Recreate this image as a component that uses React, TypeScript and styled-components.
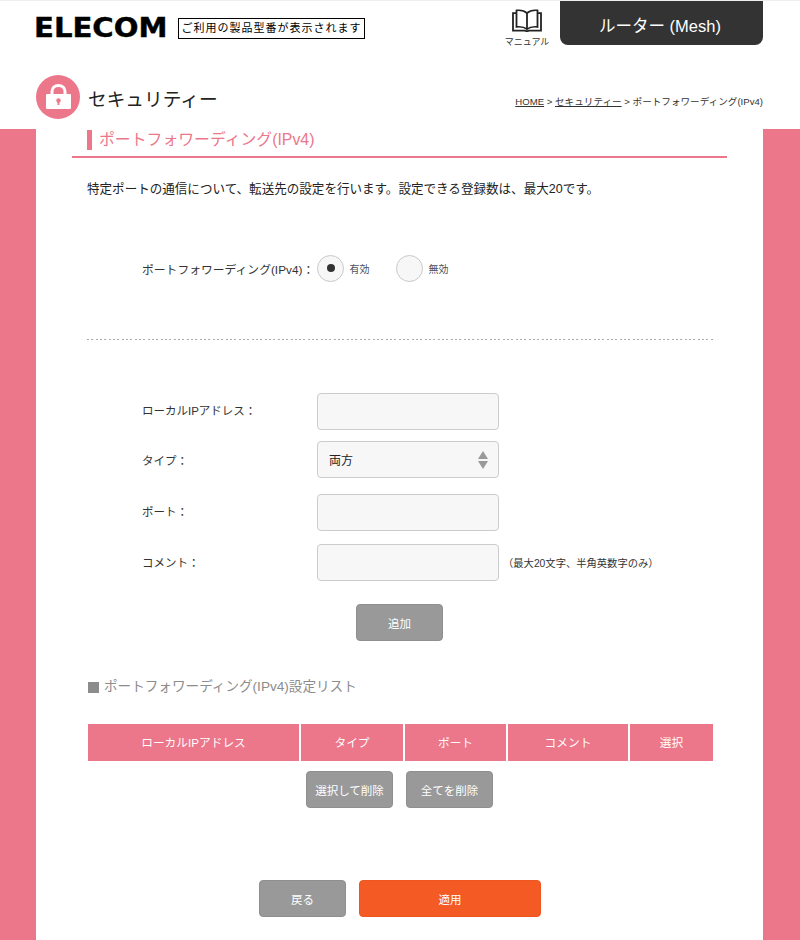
import styled, { createGlobalStyle } from "styled-components"

const pink = "#ec768a"
const grey = "#999999"

const GlobalStyle = createGlobalStyle`
    html, body {
        margin: 0;
        padding: 0;
        background: #ffffff;
    }
    body {
        font-family: "Liberation Sans", "Noto Sans CJK JP", sans-serif;
        color: #333333;
    }
`

const columns = [
    { label: "ローカルIPアドレス" },
    { label: "タイプ" },
    { label: "ポート" },
    { label: "コメント" },
    { label: "選択" }
]

const BookIcon = () => (
    <svg width="30" height="23" viewBox="0 0 30 25" preserveAspectRatio="none" fill="none" stroke="#222" strokeWidth="1.8">
        <path d="M15 4.5C12.5 1.8 8.5 1 4.5 1.5V19.5C8.5 19 12.5 19.8 15 22C17.5 19.8 21.5 19 25.5 19.5V1.5C21.5 1 17.5 1.8 15 4.5Z" />
        <path d="M15 4.5V22" />
        <path d="M4.5 4.5H1V23.5H12.5C13.5 23.5 14 24 15 24C16 24 16.5 23.5 17.5 23.5H29V4.5H25.5" />
    </svg>
)

const LockIcon = () => (
    <svg width="25" height="25" viewBox="0 0 25 25" fill="none">
        <path d="M6 11V7.5C6 3.8 8.8 1.5 12.5 1.5C16.2 1.5 19 3.8 19 7.5V11" stroke="#fff" strokeWidth="3" />
        <rect x="0" y="10" width="25" height="15" rx="1" fill="#fff" />
        <circle cx="12.5" cy="16.5" r="2.2" fill={pink} />
        <rect x="11.6" y="17" width="1.8" height="4" fill={pink} />
    </svg>
)

const SelectArrows = () => (
    <svg width="10" height="18" viewBox="0 0 10 18" fill={grey}>
        <path d="M5 0L10 8H0Z" />
        <path d="M0 10H10L5 18Z" />
    </svg>
)

export default function App() {
    return (
        <Page>
            <GlobalStyle />
            <Header>
                <TopRow>
                    <Logo>ELECOM</Logo>
                    <ModelTag>ご利用の製品型番が表示されます</ModelTag>
                    <Manual>
                        <BookIcon />
                        <ManualLabel>マニュアル</ManualLabel>
                    </Manual>
                    <RouterTab>ルーター (Mesh)</RouterTab>
                </TopRow>
                <TitleRow>
                    <TitleIcon>
                        <LockIcon />
                    </TitleIcon>
                    <PageTitle>セキュリティー</PageTitle>
                    <Breadcrumb>
                        <u>HOME</u> &gt; <u>セキュリティー</u> &gt; ポートフォワーディング(IPv4)
                    </Breadcrumb>
                </TitleRow>
            </Header>
            <Main>
                <SectionHeading>
                    <SectionTitle>ポートフォワーディング(IPv4)</SectionTitle>
                </SectionHeading>
                <Intro>特定ポートの通信について、転送先の設定を行います。設定できる登録数は、最大20です。</Intro>
                <SwitchRow>
                    <FieldLabel>ポートフォワーディング(IPv4)：</FieldLabel>
                    <Radio $checked />
                    <RadioLabel>有効</RadioLabel>
                    <Radio />
                    <RadioLabel>無効</RadioLabel>
                </SwitchRow>
                <Divider />
                <FormRow $top={0}>
                    <FormLabel $lift={2}>ローカルIPアドレス：</FormLabel>
                    <TextInput />
                </FormRow>
                <FormRow $top={11}>
                    <FormLabel $lift={0}>タイプ：</FormLabel>
                    <SelectBox>
                        両方
                        <SelectArrows />
                    </SelectBox>
                </FormRow>
                <FormRow $top={16}>
                    <FormLabel $lift={2}>ポート：</FormLabel>
                    <TextInput />
                </FormRow>
                <FormRow $top={13}>
                    <FormLabel $lift={1}>コメント：</FormLabel>
                    <TextInput />
                    <Hint>（最大20文字、半角英数字のみ）</Hint>
                </FormRow>
                <AddRow>
                    <GreyButton $width={87}>追加</GreyButton>
                </AddRow>
                <ListTitle>ポートフォワーディング(IPv4)設定リスト</ListTitle>
                <TableHead>
                    {columns.map(column => (
                        <HeadCell key={column.label}>{column.label}</HeadCell>
                    ))}
                </TableHead>
                <DeleteRow>
                    <GreyButton $width={87}>選択して削除</GreyButton>
                    <GreyButton $width={87}>全てを削除</GreyButton>
                </DeleteRow>
                <FooterRow>
                    <GreyButton $width={87}>戻る</GreyButton>
                    <ApplyButton>適用</ApplyButton>
                </FooterRow>
            </Main>
        </Page>
    )
}

const Page = styled.div`
    width: 800px;
    height: 940px;
    overflow: hidden;
    background: ${pink};
`

const Header = styled.header`
    height: 129px;
    box-sizing: border-box;
    padding: 0 37px 0 36px;
    background: #ffffff;
    border-top: 1px solid #eeeeee;
`

const TopRow = styled.div`
    display: flex;
    align-items: flex-start;
    height: 74px;
`

const Logo = styled.div`
    width: 133px;
    margin: 12px 0 0 -2px;
    padding-right: 2px;
    font-family: "DejaVu Sans", sans-serif;
    font-size: 26px;
    line-height: 30px;
    font-weight: 700;
    color: #000000;
    transform: scaleX(1.12);
    transform-origin: left center;
    -webkit-text-stroke: 0.4px #000;
`

const ModelTag = styled.div`
    margin: 17px 0 0 9px;
    width: 187px;
    height: 21px;
    box-sizing: border-box;
    border: 1px solid #000000;
    font-size: 11px;
    line-height: 19px;
    letter-spacing: 1px;
    text-align: center;
    white-space: nowrap;
    color: #000000;
`

const Manual = styled.div`
    display: flex;
    flex-direction: column;
    align-items: center;
    width: 46px;
    margin: 8px 10px 0 139px;
`

const ManualLabel = styled.span`
    margin-top: 4px;
    font-size: 9px;
    line-height: 12px;
    white-space: nowrap;
`

const RouterTab = styled.div`
    width: 203px;
    height: 44px;
    box-sizing: border-box;
    padding: 3px 3px 0 0;
    background: #333333;
    border-radius: 0 0 8px 8px;
    color: #ffffff;
    font-size: 16.5px;
    line-height: 44px;
    text-align: center;
`

const TitleRow = styled.div`
    display: flex;
    align-items: flex-start;
`

const TitleIcon = styled.div`
    display: flex;
    align-items: center;
    justify-content: center;
    width: 44px;
    height: 44px;
    padding: 0 0 1px 1px;
    box-sizing: border-box;
    border-radius: 50%;
    background: ${pink};
`

const PageTitle = styled.h1`
    margin: 3px 0 0 8px;
    font-size: 18.7px;
    line-height: 44px;
    font-weight: 400;
    color: #222222;
`

const Breadcrumb = styled.div`
    margin: 20px 0 0 auto;
    font-size: 9.6px;
    line-height: 14px;
    white-space: nowrap;
`

const Main = styled.main`
    width: 727px;
    height: 811px;
    margin-left: 36px;
    background: #ffffff;
`

const SectionHeading = styled.div`
    width: 655px;
    height: 29px;
    margin-left: 36px;
    padding: 1px 0 0 15px;
    box-sizing: border-box;
    border-bottom: 2px solid ${pink};
`

const SectionTitle = styled.h2`
    margin: 0;
    padding-left: 7px;
    border-left: 5px solid ${pink};
    font-size: 15.85px;
    line-height: 20px;
    font-weight: 400;
    color: ${pink};
`

const Intro = styled.p`
    margin: 22px 0 0 51px;
    font-size: 12.55px;
    line-height: 18px;
    color: #222222;
`

const SwitchRow = styled.div`
    display: flex;
    align-items: center;
    height: 28px;
    margin: 56px 0 0 106px;
`

const FieldLabel = styled.label`
    width: 175px;
    flex: none;
    font-size: 11.8px;
    color: #333333;
    white-space: nowrap;
`

const FormLabel = styled(FieldLabel)<{ $lift: number }>`
    margin-bottom: ${props => props.$lift * 2}px;
    font-size: 11.5px;
`

const Radio = styled.span<{ $checked?: boolean }>`
    display: flex;
    align-items: center;
    justify-content: center;
    width: 27px;
    height: 27px;
    box-sizing: border-box;
    border: 1.5px solid #c8c8c8;
    border-radius: 50%;
    background: #f7f7f7;

    &::after {
        content: "";
        display: ${props => (props.$checked ? "block" : "none")};
        width: 8px;
        height: 8px;
        border-radius: 50%;
        background: #333333;
    }
`

const RadioLabel = styled.span`
    width: 52px;
    padding-left: 5.5px;
    box-sizing: border-box;
    font-size: 10px;
    color: #4a5060;
`

const Divider = styled.hr`
    width: 626px;
    height: 1px;
    margin: 57px 0 53px 51px;
    border: 0;
    background: repeating-linear-gradient(to right, #aaaaaa 0 2px, transparent 2px 4.33px);
`

const FormRow = styled.div<{ $top: number }>`
    display: flex;
    align-items: center;
    margin: ${props => props.$top}px 0 0 106px;
`

const fieldBox = `
    width: 182px;
    height: 37px;
    box-sizing: border-box;
    border: 1.5px solid #cccccc;
    border-radius: 4px;
    background: #f7f7f7;
`

const TextInput = styled.input`
    ${fieldBox}
    display: block;
    padding: 0 12px;
`

const SelectBox = styled.div`
    ${fieldBox}
    display: flex;
    align-items: center;
    justify-content: space-between;
    padding: 0 10.5px 0 11px;
    font-size: 12px;
    color: #222222;
`

const Hint = styled.span`
    margin-left: 4px;
    font-size: 10.3px;
    color: #333333;
    white-space: nowrap;
`

const AddRow = styled.div`
    display: flex;
    margin: 23px 0 0 320px;
`

const GreyButton = styled.button<{ $width: number }>`
    width: ${props => props.$width}px;
    height: 37px;
    padding: 0;
    box-sizing: border-box;
    border: 1px solid #8f8f8f;
    border-radius: 4px;
    background: ${grey};
    color: #ffffff;
    font-family: inherit;
    font-size: 11.5px;
    white-space: nowrap;
`

const ListTitle = styled.h3`
    display: flex;
    align-items: center;
    margin: 36px 0 0 52px;
    font-size: 13.6px;
    line-height: 20px;
    font-weight: 400;
    color: #8c8c8c;

    &::before {
        content: "";
        width: 11px;
        height: 11px;
        margin-right: 5px;
        background: #8c8c8c;
    }
`

const TableHead = styled.div`
    display: grid;
    grid-template-columns: 211px 102px 101px 120px 83px;
    gap: 2px;
    width: 625px;
    margin: 27px 0 0 52px;
`

const HeadCell = styled.div`
    height: 37px;
    background: ${pink};
    color: #ffffff;
    font-size: 11.7px;
    line-height: 38px;
    text-align: center;
`

const DeleteRow = styled.div`
    display: flex;
    gap: 13px;
    margin: 10px 0 0 270px;
`

const FooterRow = styled.div`
    display: flex;
    gap: 13px;
    margin: 72px 0 0 223px;
`

const ApplyButton = styled.button`
    width: 182px;
    height: 37px;
    padding: 0;
    border: 1px solid #ee5520;
    border-radius: 4px;
    background: #f35a24;
    color: #ffffff;
    font-family: inherit;
    font-size: 11.5px;
`
